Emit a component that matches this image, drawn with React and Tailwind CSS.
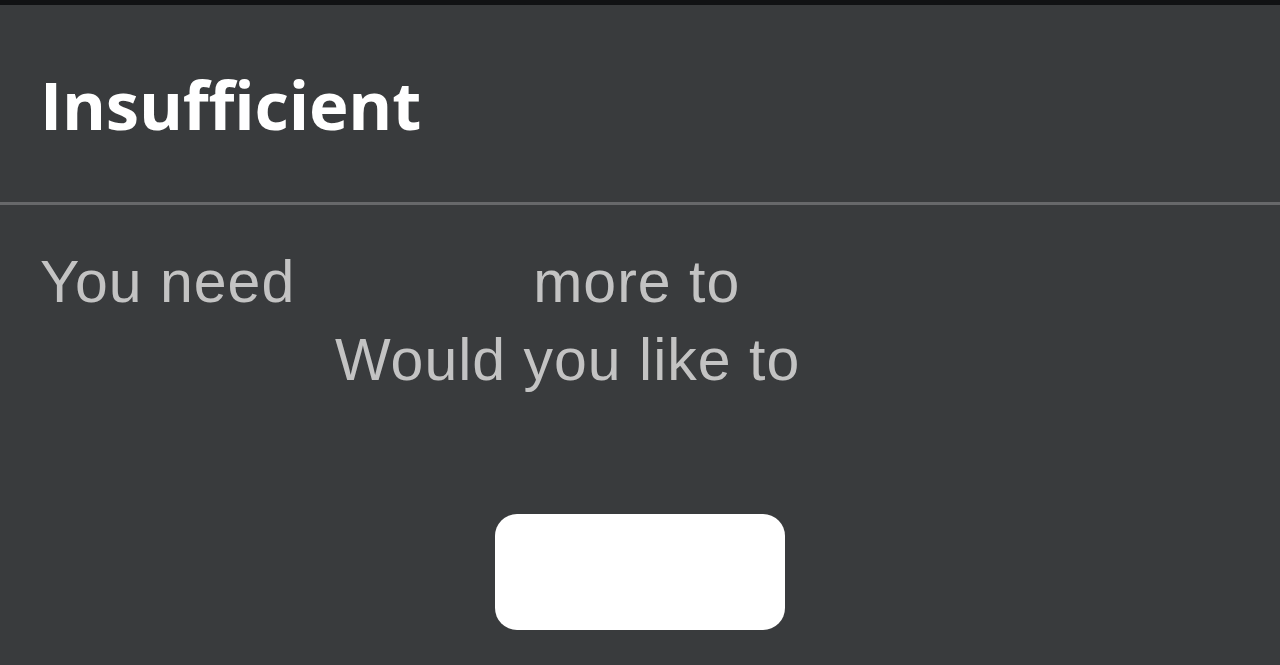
export default function App() {
  return (
    <div className="w-[1280px] h-[665px] overflow-hidden bg-[#393b3d] flex flex-col">
      <div className="h-[5px] bg-[#111214]" />
      <div className="h-[197px] flex items-center px-[40px]">
        <h1 className="text-[67px] leading-none font-bold text-white font-['Open_Sans',sans-serif] tracking-[-0.2px] mt-[2px]">
          Insufficient
        </h1>
      </div>
      <div className="h-[3px] bg-[#67686a]" />
      <div className="flex flex-col font-['Liberation_Sans',Arial,sans-serif] text-[59px] leading-[78px] tracking-[1px] text-[#c3c3c3] pt-[38px]">
        <p className="pl-[40px] flex">
          <span>You need</span>
          <span className="ml-[238px]">more to</span>
        </p>
        <p className="pl-[335px]">Would you like to</p>
      </div>
      <div className="flex justify-center mt-[115px]">
        <button className="w-[290px] h-[116px] rounded-[22px] bg-white" />
      </div>
    </div>
  );
}
